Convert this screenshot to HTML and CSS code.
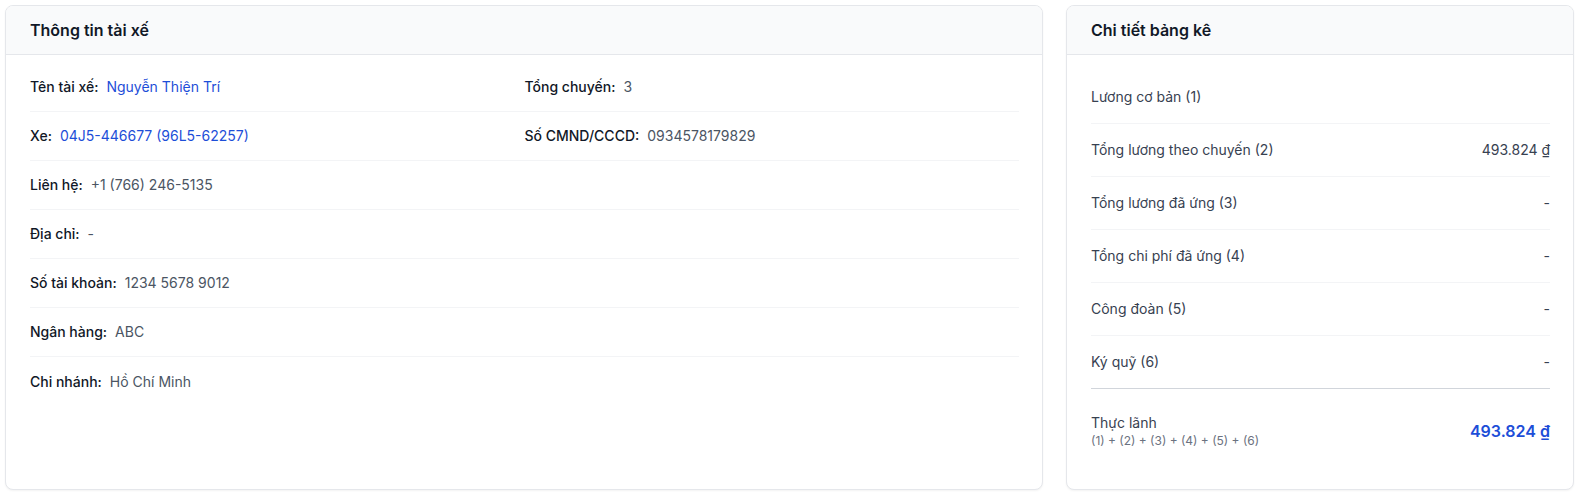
FILE: index.html
```html
<!DOCTYPE html>
<html lang="vi">
<head>
  <meta charset="UTF-8" />
  <meta name="viewport" content="width=device-width, initial-scale=1" />
  <title>Bảng kê tài xế</title>
  <link rel="stylesheet" href="styles.css">
</head>
<body>
  <div class="page">
    <div class="card">
      <div class="card-header">Thông tin tài xế</div>
      <div class="card-body info-body">
        <div class="info-grid">
          <div class="info-row"><span class="label">Tên tài xế:</span><a class="value link" href="#">Nguyễn Thiện Trí</a></div>
          <div class="info-row"><span class="label">Tổng chuyến:</span><span class="value">3</span></div>
          <div class="info-row"><span class="label">Xe:</span><a class="value link" href="#">04J5-446677 (96L5-62257)</a></div>
          <div class="info-row"><span class="label">Số CMND/CCCD:</span><span class="value">0934578179829</span></div>
          <div class="info-row full"><span class="label">Liên hệ:</span><span class="value">+1 (766) 246-5135</span></div>
          <div class="info-row full"><span class="label">Địa chỉ:</span><span class="value">-</span></div>
          <div class="info-row full"><span class="label">Số tài khoản:</span><span class="value">1234 5678 9012</span></div>
          <div class="info-row full"><span class="label">Ngân hàng:</span><span class="value">ABC</span></div>
          <div class="info-row full last"><span class="label">Chi nhánh:</span><span class="value">Hồ Chí Minh</span></div>
        </div>
      </div>
    </div>

    <div class="card">
      <div class="card-header">Chi tiết bảng kê</div>
      <div class="card-body summary-body">
        <div class="sum-row"><span>Lương cơ bản (1)</span><span></span></div>
        <div class="sum-row"><span>Tổng lương theo chuyến (2)</span><span>493.824 ₫</span></div>
        <div class="sum-row"><span>Tổng lương đã ứng (3)</span><span>-</span></div>
        <div class="sum-row"><span>Tổng chi phí đã ứng (4)</span><span>-</span></div>
        <div class="sum-row"><span>Công đoàn (5)</span><span>-</span></div>
        <div class="sum-row"><span>Ký quỹ (6)</span><span>-</span></div>
        <div class="total-row">
          <div>
            <div class="total-label">Thực lãnh</div>
            <div class="total-formula">(1) + (2) + (3) + (4) + (5) + (6)</div>
          </div>
          <div class="total-value">493.824 ₫</div>
        </div>
      </div>
    </div>
  </div>
</body>
</html>
```

FILE: styles.css
```css
* {
  box-sizing: border-box;
}
body {
  margin: 0;
  font-family: Inter, "Noto Sans", sans-serif;
  font-size: 14px;
  color: #374151;
  background: #fff;
}
.page {
  display: grid;
  grid-template-columns: 1038fr 508fr;
  gap: 23px;
  padding: 5px 9px 3px 5px;
  height: 493px;
}
.card {
  background: #fff;
  border: 1px solid #e5e7eb;
  border-radius: 8px;
  box-shadow: 0 1px 2px rgba(0,0,0,0.05);
  display: flex;
  flex-direction: column;
  overflow: hidden;
}
.card-header {
  height: 49px;
  padding: 0 24px;
  display: flex;
  align-items: center;
  background: #f9fafb;
  border-bottom: 1px solid #e5e7eb;
  font-size: 16px;
  font-weight: 600;
  color: #111827;
}
.info-body {
  padding: 8px 23px 16px 24px;
}
.info-grid {
  display: grid;
  grid-template-columns: 1fr 1fr;
}
.info-row {
  display: flex;
  align-items: center;
  gap: 8px;
  height: 49px;
  border-bottom: 1px solid #f3f4f6;
  line-height: 20px;
}
.info-row.full {
  grid-column: 1 / -1;
}
.info-row.last {
  border-bottom: none;
}
.label {
  font-weight: 500;
  color: #111827;
}
.value {
  color: #4b5563;
}
.link {
  color: #1d4ed8;
  text-decoration: none;
}
.summary-body {
  padding: 16px 23px 15px 24px;
}
.sum-row {
  display: flex;
  justify-content: space-between;
  align-items: center;
  height: 53px;
  line-height: 20px;
  border-bottom: 1px solid #f3f4f6;
  color: #374151;
}
.sum-row:nth-child(6) {
  border-bottom: 1px solid #d1d5db;
}
.total-row {
  display: flex;
  justify-content: space-between;
  align-items: center;
  padding: 24px 0;
}
.total-label {
  line-height: 20px;
  color: #374151;
}
.total-formula {
  font-size: 12px;
  line-height: 16px;
  color: #6b7280;
}
.total-value {
  font-size: 16px;
  font-weight: 600;
  color: #1d4ed8;
}
```
